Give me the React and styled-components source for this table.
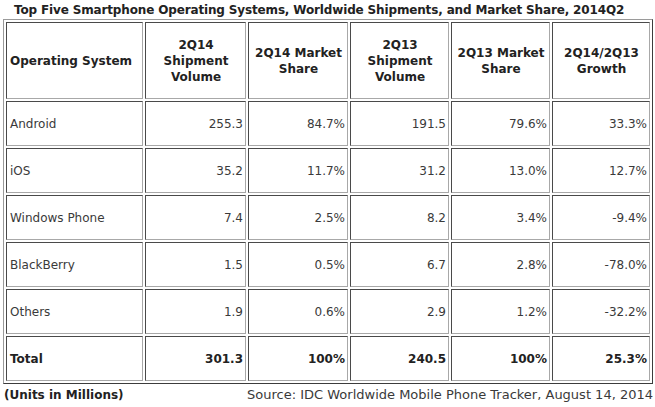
import React from "react";
import styled, { createGlobalStyle } from "styled-components";

const GlobalStyle = createGlobalStyle`
  html, body {
    margin: 0;
    padding: 0;
    background: #fff;
  }
  body {
    font-family: "DejaVu Sans", Verdana, sans-serif;
    color: #333;
  }
`;

const Page = styled.div`
  width: 655px;
  height: 407px;
  padding: 3px 0 0 3px;
  box-sizing: border-box;
`;

const Title = styled.div`
  font-size: 12px;
  font-weight: bold;
  color: #222;
  padding-left: 11px;
  height: 16px;
  line-height: 14px;
  letter-spacing: -0.15px;
`;

const Table = styled.table`
  width: 650px;
  table-layout: fixed;
  border-collapse: separate;
  border-spacing: 2px;
  border: 1px solid;
  border-color: #9a9a9a #3c3c3c #3c3c3c #9a9a9a;
  font-size: 12px;
`;

const Cell = styled.td`
  box-sizing: border-box;
  height: ${({ $head }) => ($head ? "77px" : "45px")};
  border: 1px solid;
  border-color: #4a4a4a #a8a8a8 #a8a8a8 #4a4a4a;
  padding: 0 2px 0 3px;
  text-align: ${({ $align }) => $align || "right"};
  font-weight: ${({ $bold }) => ($bold ? "bold" : "normal")};
  color: ${({ $bold }) => ($bold ? "#222" : "#3a3a3a")};
  line-height: 16px;
  vertical-align: middle;
`;

const Footer = styled.div`
  display: flex;
  justify-content: space-between;
  align-items: center;
  padding: 3px 2px 0 1px;
  font-size: 12px;
`;

const Units = styled.span`
  font-weight: bold;
  color: #222;
`;

const Source = styled.span`
  font-size: 13px;
  color: #3a3a3a;
`;

const widths = [137, 101, 100, 99, 99, 98];

const headers = [
  "2Q14<br>Shipment<br>Volume",
  "2Q14 Market<br>Share",
  "2Q13<br>Shipment<br>Volume",
  "2Q13 Market<br>Share",
  "2Q14/2Q13<br>Growth",
];

const rows = [
  ["Android", "255.3", "84.7%", "191.5", "79.6%", "33.3%"],
  ["iOS", "35.2", "11.7%", "31.2", "13.0%", "12.7%"],
  ["Windows Phone", "7.4", "2.5%", "8.2", "3.4%", "-9.4%"],
  ["BlackBerry", "1.5", "0.5%", "6.7", "2.8%", "-78.0%"],
  ["Others", "1.9", "0.6%", "2.9", "1.2%", "-32.2%"],
];

const total = ["Total", "301.3", "100%", "240.5", "100%", "25.3%"];

function Lines({ text }) {
  const parts = text.split("<br>");
  return parts.map((p, i) => (
    <React.Fragment key={i}>
      {p}
      {i < parts.length - 1 && <br />}
    </React.Fragment>
  ));
}

export default function App() {
  return (
    <Page>
      <GlobalStyle />
      <Title>
        Top Five Smartphone Operating Systems, Worldwide Shipments, and Market
        Share, 2014Q2
      </Title>
      <Table>
        <colgroup>
          {widths.map((w, i) => (
            <col key={i} style={{ width: w }} />
          ))}
        </colgroup>
        <tbody>
          <tr>
            <Cell $head $bold $align="left">
              Operating System
            </Cell>
            {headers.map((h) => (
              <Cell key={h} $head $bold $align="center">
                <Lines text={h} />
              </Cell>
            ))}
          </tr>
          {rows.map((r) => (
            <tr key={r[0]}>
              {r.map((v, i) => (
                <Cell key={i} $align={i === 0 ? "left" : "right"}>
                  {v}
                </Cell>
              ))}
            </tr>
          ))}
          <tr>
            {total.map((v, i) => (
              <Cell key={i} $bold $align={i === 0 ? "left" : "right"}>
                {v}
              </Cell>
            ))}
          </tr>
        </tbody>
      </Table>
      <Footer>
        <Units>(Units in Millions)</Units>
        <Source>Source: IDC Worldwide Mobile Phone Tracker, August 14, 2014</Source>
      </Footer>
    </Page>
  );
}
